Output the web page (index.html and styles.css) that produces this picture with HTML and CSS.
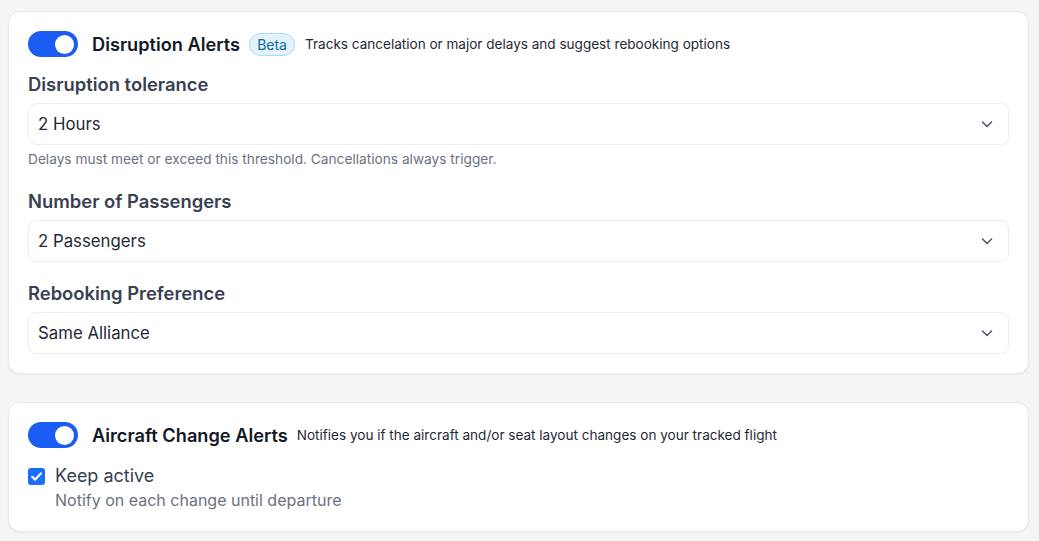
FILE: index.html
```html
<!DOCTYPE html>
<html lang="en">
<head>
<meta charset="utf-8">
<title>Alerts</title>
<link rel="stylesheet" href="styles.css">
</head>
<body>
<div class="page">
  <section class="card">
    <div class="head">
      <span class="toggle"><span class="knob"></span></span>
      <span class="title">Disruption Alerts</span>
      <span class="badge">Beta</span>
      <span class="desc">Tracks cancelation or major delays and suggest rebooking options</span>
    </div>
    <div class="field first">
      <div class="label">Disruption tolerance</div>
      <div class="select"><span>2 Hours</span><svg class="chev" width="14" height="14" viewBox="0 0 14 14"><path d="M2.5 5 L7 9.5 L11.5 5" fill="none" stroke="#4b5563" stroke-width="1.5" stroke-linecap="round" stroke-linejoin="round"/></svg></div>
      <div class="help">Delays must meet or exceed this threshold. Cancellations always trigger.</div>
    </div>
    <div class="field">
      <div class="label">Number of Passengers</div>
      <div class="select"><span>2 Passengers</span><svg class="chev" width="14" height="14" viewBox="0 0 14 14"><path d="M2.5 5 L7 9.5 L11.5 5" fill="none" stroke="#4b5563" stroke-width="1.5" stroke-linecap="round" stroke-linejoin="round"/></svg></div>
    </div>
    <div class="field">
      <div class="label">Rebooking Preference</div>
      <div class="select"><span>Same Alliance</span><svg class="chev" width="14" height="14" viewBox="0 0 14 14"><path d="M2.5 5 L7 9.5 L11.5 5" fill="none" stroke="#4b5563" stroke-width="1.5" stroke-linecap="round" stroke-linejoin="round"/></svg></div>
    </div>
  </section>

  <section class="card">
    <div class="head">
      <span class="toggle"><span class="knob"></span></span>
      <span class="title">Aircraft Change Alerts</span>
      <span class="desc">Notifies you if the aircraft and/or seat layout changes on your tracked flight</span>
    </div>
    <div class="check-row">
      <span class="checkbox"><svg width="17" height="17" viewBox="0 0 17 17"><path d="M4.2 8.8 L7.2 11.6 L12.8 5.4" fill="none" stroke="#fff" stroke-width="2.2" stroke-linecap="round" stroke-linejoin="round"/></svg></span>
      <div class="check-text">
        <div class="check-label">Keep active</div>
        <div class="check-sub">Notify on each change until departure</div>
      </div>
    </div>
  </section>
</div>
</body>
</html>
```

FILE: styles.css
```css
* { box-sizing: border-box; }
html, body { margin: 0; padding: 0; }
body {
  background: #f4f5f7;
  font-family: Inter, "Noto Sans", "Liberation Sans", sans-serif;
  color: #1f2937;
}
.page {
  padding: 11px 10px 10px 8px;
  display: flex;
  flex-direction: column;
  gap: 28px;
}
.card {
  background: #fff;
  border: 1px solid #e6e8eb;
  border-radius: 12px;
  padding: 19px;
  box-shadow: 0 1px 2px rgba(16, 24, 40, 0.05);
}
.head {
  display: flex;
  align-items: center;
  height: 26px;
}
.toggle {
  width: 50px;
  height: 26px;
  border-radius: 13px;
  background: #1b5cf5;
  display: flex;
  align-items: center;
  justify-content: flex-end;
  padding-right: 4px;
  margin-right: 14px;
  flex: none;
}
.knob {
  width: 19px;
  height: 19px;
  border-radius: 50%;
  background: #fff;
}
.title {
  font-size: 18.2px;
  font-weight: 600;
  color: #111827;
  margin-right: 9px;
  white-space: nowrap;
}
.badge {
  font-size: 14px;
  color: #0b6aa6;
  background: #e3f3fc;
  border: 1px solid #a9daf3;
  border-radius: 999px;
  padding: 2px 7px;
  line-height: 17px;
  margin-right: 10px;
}
.desc {
  font-size: 13.55px;
  color: #1f2937;
  white-space: nowrap;
}
.field { margin-top: 17px; }
.field.first { margin-top: 13px; }
.label {
  font-size: 18.4px;
  font-weight: 600;
  color: #374151;
  line-height: 28px;
  margin-bottom: 5px;
}
.select {
  height: 42px;
  border: 1px solid #eceef1;
  border-radius: 8px;
  display: flex;
  align-items: center;
  justify-content: space-between;
  padding: 0 14px 0 9px;
  font-size: 16.8px;
  color: #1f2937;
  background: #fff;
}
.chev { flex: none; }
.help {
  font-size: 13.7px;
  color: #6b7280;
  line-height: 21px;
  margin-top: 4px;
}
.check-row {
  display: flex;
  align-items: flex-start;
  margin-top: 16px;
}
.checkbox {
  width: 17px;
  height: 17px;
  border-radius: 3px;
  background: #1b6ef5;
  margin-top: 4px;
  margin-right: 10px;
  flex: none;
  display: flex;
}
.check-label {
  font-size: 18px;
  color: #374151;
  line-height: 24px;
}
.check-sub {
  font-size: 16px;
  color: #6b7280;
  line-height: 24px;
}
```
